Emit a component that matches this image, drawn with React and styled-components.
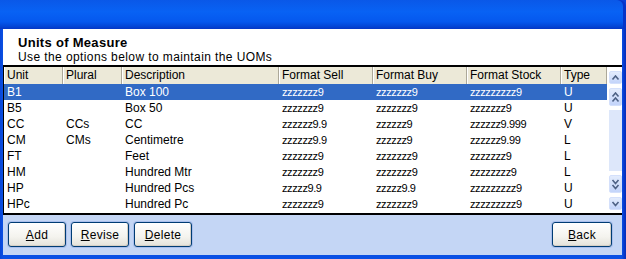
import React from "react";
import styled, { createGlobalStyle } from "styled-components";

const Global = createGlobalStyle`
  html, body { margin: 0; padding: 0; background: #fff; }
  body { width: 626px; height: 259px; overflow: hidden; font-family: Tahoma, "Liberation Sans", "DejaVu Sans", sans-serif; }
  * { box-sizing: border-box; }
`;

const Window = styled.div`
  width: 626px;
  height: 259px;
  display: flex;
  flex-direction: column;
  background: #0b3fd8;
`;

const TitleBar = styled.div`
  height: 29px;
  flex: none;
  background: linear-gradient(to bottom, #0a58e8 0%, #0862f4 40%, #0558ee 75%, #0344d4 92%, #0536c4 100%);
  border-top-right-radius: 6px;
  box-shadow: inset -3px 0 0 #0634c8;
`;

const Frame = styled.div`
  flex: 1;
  display: flex;
  flex-direction: column;
  padding: 0 4px 4px 3px;
  background: linear-gradient(to right, #0846d8 0, #0a50e4 3px, #0a50e4 calc(100% - 4px), #0838cc calc(100% - 2px), #062eb8 100%);
`;

const Header = styled.div`
  height: 38px;
  flex: none;
  background: #fff;
  padding: 7px 0 0 15px;
  display: flex;
  flex-direction: column;
  border-bottom: 2px solid #000;
`;

const Title = styled.div`
  font-weight: bold;
  font-size: 13px;
  letter-spacing: 0.3px;
  line-height: 14px;
  color: #000;
`;

const Subtitle = styled.div`
  font-size: 12px;
  letter-spacing: 0.4px;
  line-height: 14px;
  color: #000;
`;

const GridArea = styled.div`
  height: 148px;
  flex: none;
  display: flex;
  background: #fff;
  border-left: 1px solid #000;
  border-bottom: 2px solid #000;
`;

const Table = styled.div`
  width: 603px;
  display: flex;
  flex-direction: column;
`;

const cols = "59px 59px 157px 94px 94px 94px 46px";

const HeadRow = styled.div`
  display: grid;
  grid-template-columns: ${cols};
  height: 17px;
  background: #ece9d8;
`;

const HeadCell = styled.div`
  font-size: 12px;
  line-height: 17px;
  padding-left: 3px;
  color: #000;
  border-right: 1px solid #aca899;
  box-shadow: inset 1px 0 0 #fff;
  white-space: nowrap;
  overflow: hidden;
`;

const Row = styled.div`
  display: grid;
  grid-template-columns: ${cols};
  height: 16px;
  background: ${(p) => (p.$sel ? "#316ac5" : "#fff")};
  color: ${(p) => (p.$sel ? "#fff" : "#000")};
`;

const Cell = styled.div`
  font-size: 12px;
  line-height: 16px;
  padding-left: 3px;
  white-space: nowrap;
  overflow: hidden;
`;

const FmtCell = styled(Cell)`
  font-size: 11px;
  letter-spacing: -0.4px;
`;

const ScrollCol = styled.div`
  flex: 1;
  display: flex;
  flex-direction: column;
  align-items: center;
  padding: 4px 0 3px 2px;
  gap: 4px;
  background: #fff;
`;

const ScrollBtn = styled.div`
  width: 13px;
  height: ${(p) => p.$h}px;
  flex: none;
  border-radius: 2px;
  background: linear-gradient(to bottom, #e3ecfd, #c3d4fa);
  border: 1px solid #d4e0fb;
  display: flex;
  align-items: center;
  justify-content: center;
`;

const Track = styled.div`
  width: 13px;
  flex: 1;
  background: #dde7fa;
`;

const Footer = styled.div`
  flex: 1;
  background: #c4d6f5;
  display: flex;
  align-items: flex-start;
  padding: 7px 10px 0 5px;
  gap: 5px;
`;

const Button = styled.button`
  width: ${(p) => p.$w || 58}px;
  height: 25px;
  border: 1px solid #003c74;
  border-radius: 3px;
  background: linear-gradient(to bottom, #ffffff 0%, #f4f3ee 60%, #e3e2da 100%);
  box-shadow: inset -1px -1px 0 #d6d0c5, 0 0 0 1px rgba(120,150,220,0.35);
  font-family: Tahoma, "Liberation Sans", "DejaVu Sans", sans-serif;
  font-size: 12px;
  letter-spacing: 0.3px;
  color: #000;
  padding: 0;
  margin-left: ${(p) => (p.$push ? "auto" : "0")};
  u { text-decoration: underline; }
`;

const Chev = ({ dir, double }) => {
  const up = dir === "up";
  const pts = (y) => (up ? `1.5,${y + 3.5} 4.5,${y} 7.5,${y + 3.5}` : `1.5,${y} 4.5,${y + 3.5} 7.5,${y}`);
  return (
    <svg width="9" height={double ? 11 : 6} viewBox={`0 0 9 ${double ? 11 : 6}`}>
      <polyline points={pts(1)} fill="none" stroke="#4d6185" strokeWidth="1.6" />
      {double && <polyline points={pts(6)} fill="none" stroke="#4d6185" strokeWidth="1.6" />}
    </svg>
  );
};

const rows = [
  ["B1", "", "Box 100", "zzzzzzz9", "zzzzzzz9", "zzzzzzzzz9", "U"],
  ["B5", "", "Box 50", "zzzzzzz9", "zzzzzzz9", "zzzzzzz9", "U"],
  ["CC", "CCs", "CC", "zzzzzz9.9", "zzzzzz9", "zzzzzz9.999", "V"],
  ["CM", "CMs", "Centimetre", "zzzzzz9.9", "zzzzzz9", "zzzzzz9.99", "L"],
  ["FT", "", "Feet", "zzzzzzz9", "zzzzzzz9", "zzzzzzz9", "L"],
  ["HM", "", "Hundred Mtr", "zzzzzzz9", "zzzzzzz9", "zzzzzzzz9", "L"],
  ["HP", "", "Hundred Pcs", "zzzzz9.9", "zzzzz9.9", "zzzzzzzzz9", "U"],
  ["HPc", "", "Hundred Pc", "zzzzzzz9", "zzzzzzz9", "zzzzzzzzz9", "U"],
];

const heads = ["Unit", "Plural", "Description", "Format Sell", "Format Buy", "Format Stock", "Type"];

export default function App() {
  return (
    <>
      <Global />
      <Window>
        <TitleBar />
        <Frame>
          <Header>
            <Title>Units of Measure</Title>
            <Subtitle>Use the options below to maintain the UOMs</Subtitle>
          </Header>
          <GridArea>
            <Table>
              <HeadRow>
                {heads.map((h) => (
                  <HeadCell key={h}>{h}</HeadCell>
                ))}
              </HeadRow>
              {rows.map((r, i) => (
                <Row key={r[0]} $sel={i === 0}>
                  <Cell>{r[0]}</Cell>
                  <Cell>{r[1]}</Cell>
                  <Cell>{r[2]}</Cell>
                  <FmtCell>{r[3]}</FmtCell>
                  <FmtCell>{r[4]}</FmtCell>
                  <FmtCell>{r[5]}</FmtCell>
                  <Cell>{r[6]}</Cell>
                </Row>
              ))}
            </Table>
            <ScrollCol>
              <ScrollBtn $h={13}><Chev dir="up" /></ScrollBtn>
              <ScrollBtn $h={18}><Chev dir="up" double /></ScrollBtn>
              <Track />
              <ScrollBtn $h={18}><Chev dir="down" double /></ScrollBtn>
              <ScrollBtn $h={13}><Chev dir="down" /></ScrollBtn>
            </ScrollCol>
          </GridArea>
          <Footer>
            <Button><u>A</u>dd</Button>
            <Button><u>R</u>evise</Button>
            <Button><u>D</u>elete</Button>
            <Button $push $w={60}><u>B</u>ack</Button>
          </Footer>
        </Frame>
      </Window>
    </>
  );
}
